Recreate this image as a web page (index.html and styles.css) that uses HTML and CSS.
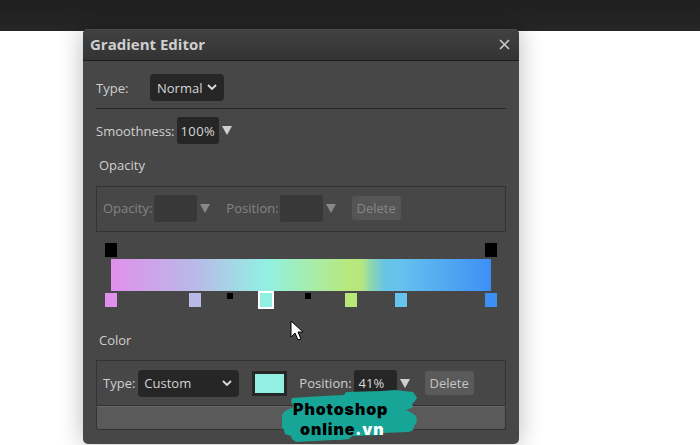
FILE: index.html
```html
<!DOCTYPE html>
<html lang="en">
<head>
<meta charset="utf-8">
<title>Gradient Editor</title>
<link rel="stylesheet" href="styles.css">
</head>
<body>
<div class="topbar"></div>
<div class="dialog">
  <header class="titlebar">
    <span class="title">Gradient Editor</span>
    <svg class="close" width="11" height="11" viewBox="0 0 11 11"><path d="M1 1l9 9M10 1l-9 9" stroke="#c8c8c8" stroke-width="1.7" fill="none"/></svg>
  </header>
  <div class="content">
    <div class="row type-row">
      <span class="type-label">Type:</span>
      <div class="select normal-select">Normal
        <svg class="chev" width="10" height="7" viewBox="0 0 10 7"><path d="M1 1l4 4 4-4" stroke="#ddd" stroke-width="1.8" fill="none"/></svg>
      </div>
    </div>
    <hr class="rule">
    <div class="row smooth-row">
      <span>Smoothness:</span>
      <div class="field">100%</div>
      <span class="tri"></span>
    </div>
    <div class="section-label opacity-label">Opacity</div>
    <div class="box disabled">
      <span class="lab-a">Opacity:</span>
      <div class="field wide-field empty"></div>
      <span class="tri"></span>
      <span class="lab-b">Position:</span>
      <div class="field wide-field empty"></div>
      <span class="tri"></span>
      <button class="del">Delete</button>
    </div>
    <div class="editor">
      <div class="stops top-stops">
        <i class="stop black"></i>
        <i class="stop black"></i>
      </div>
      <div class="bar"></div>
      <div class="stops-bottom">
        <i class="stop s1"></i>
        <i class="stop s2"></i>
        <i class="mid m1"></i>
        <i class="stop s3"></i>
        <i class="mid m2"></i>
        <i class="stop s4"></i>
        <i class="stop s5"></i>
        <i class="stop s6"></i>
      </div>
    </div>
    <div class="section-label color-label">Color</div>
    <div class="box">
      <span class="lab-a">Type:</span>
      <div class="select custom-select">Custom
        <svg class="chev" width="10" height="7" viewBox="0 0 10 7"><path d="M1 1l4 4 4-4" stroke="#ddd" stroke-width="1.8" fill="none"/></svg>
      </div>
      <div class="swatch"></div>
      <span class="lab-c">Position:</span>
      <div class="field wide-field">41%</div>
      <span class="tri"></span>
      <button class="del del-c">Delete</button>
    </div>
    <div class="wide"></div>
  </div>
</div>
<svg class="cursor" width="14" height="21" viewBox="0 0 14 21"><path d="M1 1v16l4-4 3 7 3-1-3-7h5z" fill="#fff" stroke="#000" stroke-width="1"/></svg>
<div class="mark">
  <svg class="brush" width="136" height="54" viewBox="0 0 136 54"><polygon points="10,9 40,7 62,6 64,3 100,2 113,1 131,3 134,7 135,9 133,12 130,15 131,18 127,20 124,21 130,24 134,27 135,33 132,37 131,41 127,43 100,44 98,46 70,47 67,50 59,51 51,51 14,53 10,50 9,47 3,45 2,41 0,39 0,31 0,26 3,22 10,19 12,18 10,15 9,12" fill="#17a597"/></svg>
  <div class="mark-text">Photoshop<br><span class="mark-2">online<b>.vn</b></span></div>
</div>
</body>
</html>
```

FILE: styles.css
```css
* { box-sizing: border-box; }
html, body { margin: 0; height: 445px; overflow: hidden; }
body { background: #fff; font-family: "Open Sans", sans-serif; font-size: 13px; color: #cfcfcf; position: relative; }
.topbar { height: 31px; background: linear-gradient(#1f1f1f, #262626); }
.dialog { width: 436px; height: 415px; margin: -2px 0 0 83px; background: #474747; border-radius: 5px; box-shadow: 0 0 24px rgba(0,0,0,.28); overflow: hidden; position: relative; }
.titlebar { height: 32px; display: flex; align-items: center; justify-content: space-between; padding: 0 9px 1px 7px; background: linear-gradient(#414141, #333); border-bottom: 1px solid #1e1e1e; border-top: 1px solid #4a4a4a; }
.title { font-weight: 700; font-size: 15px; line-height: 20px; margin-bottom: 2px; color: #cfcfcf; }
.close { display: block; }
.content { padding: 13px 13px 0; display: flex; flex-direction: column; }
.row { display: flex; align-items: center; }
.type-label { width: 54px; }
.select { background: #262626; border-radius: 4px; height: 27px; display: flex; align-items: center; justify-content: space-between; padding: 0 7px; color: #d4d4d4; }
.normal-select { width: 74px; }
.rule { width: 410px; height: 1px; border: 0; background: #262626; margin: 7px 0 8px; }
.smooth-row { gap: 2px; }
.smooth-row .tri { margin-left: 1px; }
.smooth-row .field { letter-spacing: .4px; }
.field { width: 42px; height: 27px; background: #262626; border-radius: 3px; display: flex; align-items: center; padding-left: 4px; color: #d8d8d8; }
.wide-field { width: 43px; padding-left: 5px; }
.tri { width: 0; height: 0; border-left: 5px solid transparent; border-right: 5px solid transparent; border-top: 9px solid #d0d0d0; }
.section-label { margin-left: 3px; line-height: 18px; }
.opacity-label { margin-top: 12px; }
.box { width: 410px; height: 46px; border: 1px solid #333; display: flex; align-items: center; padding-left: 6px; margin-top: 12px; }
.disabled { color: #848484; padding-bottom: 2px; }
.disabled .field { background: #383838; }
.disabled .tri { border-top-color: #888; }
.lab-a { margin-right: 2px; }
.box .tri { margin-left: 3px; }
.lab-b { margin: 0 1px 0 16px; }
.del { width: 49px; height: 24px; margin-left: 16px; background: #555; border: 0; border-radius: 3px; font: 13px "Open Sans", sans-serif; color: #858585; padding: 0; }
.del-c { color: #c6c6c6; margin-left: 15px; background: #5a5a5a; }
.editor { margin-top: 11px; }
.top-stops { width: 392px; margin-left: 9px; display: flex; justify-content: space-between; height: 14px; }
.stop { display: block; width: 12px; height: 14px; }
.black { background: #000; }
.bar { width: 380px; height: 32px; margin: 2px 0 0 15px; background: linear-gradient(90deg, #e090ec 0%, #b9b9e8 22%, #92f0e2 41%, #b9e87a 63%, #b4e680 66%, #8bd4b5 68.7%, #68c4e4 72%, #66c2ee 76%, #3e8ff5 100%); }
.stops-bottom { position: relative; height: 18px; }
.stops-bottom .stop, .mid { position: absolute; top: 2px; }
.s1 { left: 9px; background: #e090ec; }
.s2 { left: 93px; background: #b9b9e8; }
.s3 { left: 162px; width: 16px; height: 18px; top: 0 !important; background: #92f0e2; border: 2px solid #fff; }
.s4 { left: 249px; background: #b9e87a; }
.s5 { left: 299px; background: #66c2ee; }
.s6 { left: 389px; background: #3e8ff5; }
.mid { width: 6px; height: 6px; background: #000; }
.m1 { left: 131px; }
.m2 { left: 209px; }
.color-label { margin-top: 22px; }
.color-label + .box { margin-top: 11px; }
.custom-select { width: 101px; margin-left: 1px; padding-left: 6px; }
.swatch { width: 35px; height: 25px; margin: 0 12px 0 13px; background: #92f0e2; border: 3px solid #262626; }
.lab-c { margin-right: 2px; }
.wide { width: 410px; height: 24px; background: #5a5a5a; border: 1px solid #333; border-top-color: #666; border-radius: 3px; }
.cursor { position: absolute; left: 290px; top: 320px; }
.mark { position: absolute; left: 282px; top: 389px; width: 136px; height: 54px; }
.brush { position: absolute; left: 0; top: 0; }
.mark-text { position: relative; font-family: Inter, sans-serif; font-weight: 900; font-size: 16px; line-height: 20px; letter-spacing: .9px; color: #000; padding: 10px 0 0 11px; }
.mark-2 { margin-left: 7px; }
.mark-2 b { color: #fff; font-weight: 900; }
```
